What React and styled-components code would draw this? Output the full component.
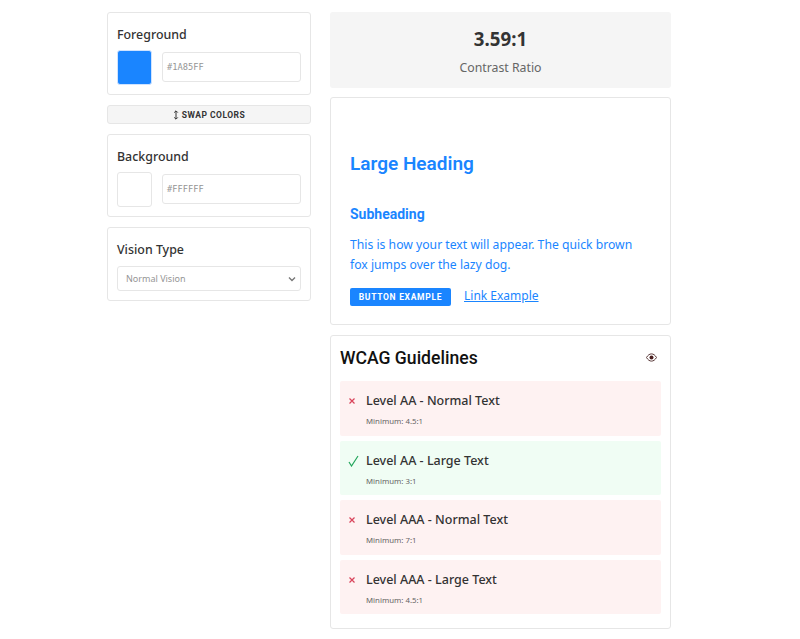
import styled, { createGlobalStyle } from "styled-components"

const GlobalStyle = createGlobalStyle`
  body {
    margin: 0;
    background: #fff;
    font-family: "Noto Sans", "Open Sans", sans-serif;
    color: #333;
  }
`

const Page = styled.div`
  width: 564px;
  margin-left: 107px;
  padding: 12px 0 9px;
  display: grid;
  grid-template-columns: 204px 341px;
  column-gap: 19px;
  align-items: start;
`

const Column = styled.div`
  display: flex;
  flex-direction: column;
  gap: 10px;
`

const Card = styled.div`
  box-sizing: border-box;
  background: #fff;
  border: 1px solid #e6e6e6;
  border-radius: 3px;
  padding: ${props => props.padding || "12px 9px 0"};
`

const ControlCard = styled(Card)`
  height: ${props => props.height};
`

const Label = styled.div`
  font-size: 12.4px;
  line-height: 20px;
  font-weight: 500;
  color: #333;
  margin-bottom: 5px;
`

const ColorRow = styled.div`
  display: flex;
  align-items: flex-start;
  gap: 10px;
`

const Swatch = styled.div`
  box-sizing: border-box;
  width: 35px;
  height: 35px;
  border-radius: 3px;
  border: 1px solid ${props => props.color === "#FFFFFF" ? "#e6e6e6" : "#cfe3ff"};
  background: ${props => props.color};
`

const HexInput = styled.div`
  box-sizing: border-box;
  flex: 1;
  height: 30px;
  margin-top: 2px;
  padding: 0 4px;
  display: flex;
  align-items: center;
  border: 1px solid #e6e6e6;
  border-radius: 3px;
  font-family: "DejaVu Sans Mono", monospace;
  font-size: 8.7px;
  color: #959595;
`

const SwapButton = styled.button`
  box-sizing: border-box;
  height: 19px;
  padding: 0;
  display: flex;
  align-items: center;
  justify-content: center;
  gap: 3px;
  background: #f5f5f5;
  border: 1px solid #e6e6e6;
  border-radius: 3px;
  font-family: Roboto, sans-serif;
  font-size: 8.5px;
  font-weight: 700;
  letter-spacing: 0.5px;
  color: #333;
`

const SelectBox = styled.div`
  box-sizing: border-box;
  height: 25px;
  margin-top: 6px;
  padding: 0 4px 0 8px;
  display: flex;
  align-items: center;
  justify-content: space-between;
  border: 1px solid #e6e6e6;
  border-radius: 3px;
  font-size: 9px;
  color: #959595;
`

const VisionLabel = styled(Label)`
  margin-bottom: 0;
`

const RatioCard = styled.div`
  height: 76px;
  background: #f5f5f5;
  border-radius: 3px;
  display: flex;
  flex-direction: column;
  align-items: center;
`

const Ratio = styled.div`
  margin-top: 14px;
  font-size: 18.7px;
  line-height: 26px;
  font-weight: 700;
  color: #333;
`

const RatioLabel = styled.div`
  margin-top: 7px;
  font-size: 12.3px;
  line-height: 18px;
  color: #666;
`

const PreviewCard = styled(Card)`
  height: 228px;
  margin-top: -1px;
  padding: 53px 19px 0;
  color: #1a85ff;
`

const LargeHeading = styled.h1`
  margin: 0;
  font-family: Roboto, sans-serif;
  font-size: 19px;
  line-height: 26px;
  font-weight: 600;
`

const SubHeading = styled.h2`
  margin: 27px 0 0;
  font-family: Roboto, sans-serif;
  font-size: 14px;
  line-height: 20px;
  font-weight: 700;
`

const PreviewText = styled.p`
  margin: 11px 0 0;
  font-size: 12.2px;
  line-height: 20px;
`

const PreviewActions = styled.div`
  margin-top: 13px;
  display: flex;
  align-items: center;
  gap: 13px;
`

const ExampleButton = styled.button`
  box-sizing: border-box;
  width: 101px;
  height: 18px;
  padding: 0;
  border: none;
  border-radius: 2px;
  background: #1a85ff;
  color: #fff;
  font-family: Roboto, sans-serif;
  font-size: 8.5px;
  font-weight: 700;
  letter-spacing: 0.7px;
`

const ExampleLink = styled.a`
  margin-top: -3px;
  font-size: 12px;
  line-height: 18px;
  color: #1a85ff;
  text-decoration: underline;
`

const GuidelineCard = styled(Card)`
  height: 294px;
  padding: 9px 9px 0;
`

const GuidelineHeader = styled.div`
  display: flex;
  align-items: center;
  justify-content: space-between;
  height: 25px;
  padding-right: 4px;
  margin-bottom: 11px;
`

const GuidelineTitle = styled.h2`
  margin: 0;
  font-family: Roboto, sans-serif;
  font-size: 17.6px;
  font-weight: 500;
  color: #111;
`

const GuidelineList = styled.div`
  display: flex;
  flex-direction: column;
  gap: 5px;
`

const Guideline = styled.div`
  height: 54.6px;
  box-sizing: border-box;
  padding: 10px 8px 0;
  display: grid;
  grid-template-columns: 18px 1fr;
  border-radius: 2px;
  background: ${props => props.$pass ? "#f0fdf4" : "#fef2f2"};
`

const StatusMark = styled.div`
  display: flex;
  align-items: center;
  height: 20px;
  color: ${props => props.$pass ? "#22a55b" : "#d9435a"};
`

const GuidelineName = styled.div`
  font-size: 12.5px;
  line-height: 20px;
  font-weight: 500;
  color: #333;
`

const GuidelineMin = styled.div`
  margin-top: 4px;
  font-size: 7.8px;
  line-height: 12px;
  color: #666;
`

const guidelines = [
  { name: "Level AA - Normal Text", min: "4.5:1", pass: false },
  { name: "Level AA - Large Text", min: "3:1", pass: true },
  { name: "Level AAA - Normal Text", min: "7:1", pass: false },
  { name: "Level AAA - Large Text", min: "4.5:1", pass: false },
]

const App = () => {
  return (
    <>
      <GlobalStyle />
      <Page>
        <Column>
          <ControlCard height="83px">
            <Label>Foreground</Label>
            <ColorRow>
              <Swatch color="#1A85FF" />
              <HexInput>#1A85FF</HexInput>
            </ColorRow>
          </ControlCard>
          <SwapButton>
            <svg width="6" height="10" viewBox="0 0 6 10" fill="none" stroke="#333" strokeWidth="1">
              <path d="M3 1v8M1.200 2.600 3 .8l1.800 1.800M1.200 7.400 3 9.200l1.800-1.800" />
            </svg>
            SWAP COLORS
          </SwapButton>
          <ControlCard height="83px">
            <Label>Background</Label>
            <ColorRow>
              <Swatch color="#FFFFFF" />
              <HexInput>#FFFFFF</HexInput>
            </ColorRow>
          </ControlCard>
          <ControlCard height="74px">
            <VisionLabel>Vision Type</VisionLabel>
            <SelectBox>
              Normal Vision
              <svg width="8" height="6" viewBox="0 0 8 6" fill="none" stroke="#777" strokeWidth="1.400">
                <path d="M1 1.500 4 4.500 7 1.500" />
              </svg>
            </SelectBox>
          </ControlCard>
        </Column>
        <Column>
          <RatioCard>
            <Ratio>3.59:1</Ratio>
            <RatioLabel>Contrast Ratio</RatioLabel>
          </RatioCard>
          <PreviewCard>
            <LargeHeading>Large Heading</LargeHeading>
            <SubHeading>Subheading</SubHeading>
            <PreviewText>This is how your text will appear. The quick brown fox jumps over the lazy dog.</PreviewText>
            <PreviewActions>
              <ExampleButton>BUTTON EXAMPLE</ExampleButton>
              <ExampleLink>Link Example</ExampleLink>
            </PreviewActions>
          </PreviewCard>
          <GuidelineCard>
            <GuidelineHeader>
              <GuidelineTitle>WCAG Guidelines</GuidelineTitle>
              <svg width="11" height="9" viewBox="0 0 11 9">
                <path d="M.5 4.500C2 2 3.600.9 5.500.9s3.500 1.100 5 3.600c-1.500 2.500-3.100 3.600-5 3.600S2 7 .5 4.500z" fill="none" stroke="#5a3a3a" strokeWidth="1" />
                <circle cx="5.500" cy="4.500" r="2" fill="#4a1f1f" />
              </svg>
            </GuidelineHeader>
            <GuidelineList>
              {guidelines.map(item => (
                <Guideline key={item.name} $pass={item.pass}>
                  <StatusMark $pass={item.pass}>
                    {item.pass ? (
                      <svg width="11" height="12" viewBox="0 0 11 12" fill="none" stroke="currentColor" strokeWidth="1.200">
                        <path d="M1 7l2.500 4L10 1" />
                      </svg>
                    ) : (
                      <svg width="8" height="8" viewBox="0 0 8 8" fill="none" stroke="currentColor" strokeWidth="1.200">
                        <path d="M1.500 1.500l5 5M6.500 1.500l-5 5" />
                      </svg>
                    )}
                  </StatusMark>
                  <div>
                    <GuidelineName>{item.name}</GuidelineName>
                    <GuidelineMin>Minimum: {item.min}</GuidelineMin>
                  </div>
                </Guideline>
              ))}
            </GuidelineList>
          </GuidelineCard>
        </Column>
      </Page>
    </>
  )
}

export default App
